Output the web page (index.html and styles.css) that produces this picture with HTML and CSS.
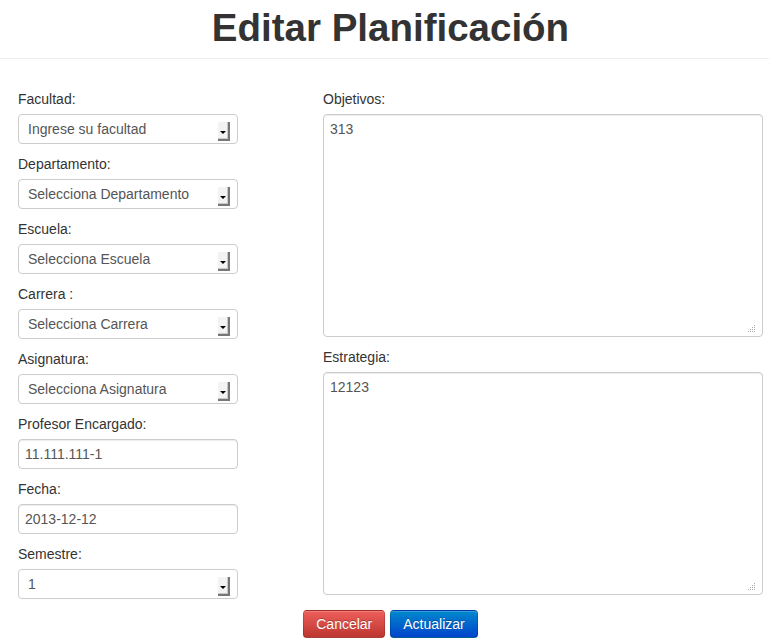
FILE: index.html
```html
<!DOCTYPE html>
<html lang="es">
<head>
<meta charset="utf-8">
<title>Editar Planificación</title>
<link rel="stylesheet" href="styles.css">
</head>
<body>
<header class="page-header">
  <h1>Editar Planificación</h1>
</header>
<form class="form">
  <div class="col-left">
    <label class="lbl">Facultad:</label>
    <div class="select"><span>Ingrese su facultad</span><svg class="arrow" width="12" height="19" viewBox="0 0 12 19"><rect x="0" y="0" width="12" height="19" fill="#f3f3f3"/><rect x="10" y="0" width="2" height="19" fill="#777"/><rect x="0" y="17" width="12" height="2" fill="#777"/><rect x="9" y="0" width="1" height="17" fill="#c8c8c8"/><rect x="0" y="16" width="10" height="1" fill="#c8c8c8"/><polygon points="2,9 8,9 5,12" fill="#000"/></svg></div>
    <label class="lbl">Departamento:</label>
    <div class="select"><span>Selecciona Departamento</span><svg class="arrow" width="12" height="19" viewBox="0 0 12 19"><rect x="0" y="0" width="12" height="19" fill="#f3f3f3"/><rect x="10" y="0" width="2" height="19" fill="#777"/><rect x="0" y="17" width="12" height="2" fill="#777"/><rect x="9" y="0" width="1" height="17" fill="#c8c8c8"/><rect x="0" y="16" width="10" height="1" fill="#c8c8c8"/><polygon points="2,9 8,9 5,12" fill="#000"/></svg></div>
    <label class="lbl">Escuela:</label>
    <div class="select"><span>Selecciona Escuela</span><svg class="arrow" width="12" height="19" viewBox="0 0 12 19"><rect x="0" y="0" width="12" height="19" fill="#f3f3f3"/><rect x="10" y="0" width="2" height="19" fill="#777"/><rect x="0" y="17" width="12" height="2" fill="#777"/><rect x="9" y="0" width="1" height="17" fill="#c8c8c8"/><rect x="0" y="16" width="10" height="1" fill="#c8c8c8"/><polygon points="2,9 8,9 5,12" fill="#000"/></svg></div>
    <label class="lbl">Carrera :</label>
    <div class="select"><span>Selecciona Carrera</span><svg class="arrow" width="12" height="19" viewBox="0 0 12 19"><rect x="0" y="0" width="12" height="19" fill="#f3f3f3"/><rect x="10" y="0" width="2" height="19" fill="#777"/><rect x="0" y="17" width="12" height="2" fill="#777"/><rect x="9" y="0" width="1" height="17" fill="#c8c8c8"/><rect x="0" y="16" width="10" height="1" fill="#c8c8c8"/><polygon points="2,9 8,9 5,12" fill="#000"/></svg></div>
    <label class="lbl">Asignatura:</label>
    <div class="select"><span>Selecciona Asignatura</span><svg class="arrow" width="12" height="19" viewBox="0 0 12 19"><rect x="0" y="0" width="12" height="19" fill="#f3f3f3"/><rect x="10" y="0" width="2" height="19" fill="#777"/><rect x="0" y="17" width="12" height="2" fill="#777"/><rect x="9" y="0" width="1" height="17" fill="#c8c8c8"/><rect x="0" y="16" width="10" height="1" fill="#c8c8c8"/><polygon points="2,9 8,9 5,12" fill="#000"/></svg></div>
    <label class="lbl">Profesor Encargado:</label>
    <input class="input" type="text" value="11.111.111-1">
    <label class="lbl">Fecha:</label>
    <input class="input" type="text" value="2013-12-12">
    <label class="lbl">Semestre:</label>
    <div class="select"><span>1</span><svg class="arrow" width="12" height="19" viewBox="0 0 12 19"><rect x="0" y="0" width="12" height="19" fill="#f3f3f3"/><rect x="10" y="0" width="2" height="19" fill="#777"/><rect x="0" y="17" width="12" height="2" fill="#777"/><rect x="9" y="0" width="1" height="17" fill="#c8c8c8"/><rect x="0" y="16" width="10" height="1" fill="#c8c8c8"/><polygon points="2,9 8,9 5,12" fill="#000"/></svg></div>
  </div>
  <div class="col-right">
    <label class="lbl">Objetivos:</label>
    <div class="area-wrap">
      <textarea class="area">313</textarea>
      <svg class="grip" width="7" height="7" viewBox="0 0 7 7"><g fill="#aaa"><rect x="6" y="0" width="1" height="1"/><rect x="4" y="2" width="1" height="1"/><rect x="6" y="2" width="1" height="1"/><rect x="2" y="4" width="1" height="1"/><rect x="4" y="4" width="1" height="1"/><rect x="6" y="4" width="1" height="1"/><rect x="0" y="6" width="1" height="1"/><rect x="2" y="6" width="1" height="1"/><rect x="4" y="6" width="1" height="1"/><rect x="6" y="6" width="1" height="1"/></g></svg>
    </div>
    <label class="lbl">Estrategia:</label>
    <div class="area-wrap">
      <textarea class="area">12123</textarea>
      <svg class="grip" width="7" height="7" viewBox="0 0 7 7"><g fill="#aaa"><rect x="6" y="0" width="1" height="1"/><rect x="4" y="2" width="1" height="1"/><rect x="6" y="2" width="1" height="1"/><rect x="2" y="4" width="1" height="1"/><rect x="4" y="4" width="1" height="1"/><rect x="6" y="4" width="1" height="1"/><rect x="0" y="6" width="1" height="1"/><rect x="2" y="6" width="1" height="1"/><rect x="4" y="6" width="1" height="1"/><rect x="6" y="6" width="1" height="1"/></g></svg>
    </div>
  </div>
  <div class="actions">
    <button type="button" class="btn btn-danger">Cancelar</button>
    <button type="button" class="btn btn-primary">Actualizar</button>
  </div>
</form>
</body>
</html>
```
FILE: styles.css
```css
html, body {
  margin: 0;
  padding: 0;
  background: #fff;
}
body {
  font-family: "Liberation Sans", Arial, Helvetica, sans-serif;
  font-size: 14px;
  line-height: 20px;
  color: #333;
}
.page-header {
  padding: 8px 0 10px;
  border-bottom: 1px solid #eee;
  margin-bottom: 30px;
}
.page-header h1 {
  margin: 0;
  padding-left: 12px;
  font-size: 38.5px;
  line-height: 40px;
  font-weight: bold;
  text-align: center;
  color: #333;
}
.form {
  display: grid;
  grid-template-columns: 220px 440px;
  column-gap: 85px;
  padding-left: 18px;
}
.col-left, .col-right {
  display: flex;
  flex-direction: column;
  align-items: flex-start;
}
.lbl {
  display: block;
  margin-bottom: 5px;
  line-height: 20px;
  color: #333;
}
.select {
  box-sizing: border-box;
  width: 220px;
  height: 30px;
  margin-bottom: 10px;
  border: 1px solid #ccc;
  border-radius: 4px;
  background: #fff;
  display: flex;
  justify-content: space-between;
  align-items: flex-start;
  padding: 4px 7px 0 9px;
  color: #555;
}
.select span {
  line-height: 20px;
}
.arrow {
  display: block;
  flex: none;
  margin-top: 3px;
}
.input {
  box-sizing: border-box;
  width: 220px;
  height: 30px;
  margin: 0 0 10px;
  padding: 4px 6px;
  border: 1px solid #ccc;
  border-radius: 4px;
  font-family: inherit;
  font-size: 14px;
  line-height: 20px;
  color: #555;
  box-shadow: inset 0 1px 1px rgba(0,0,0,.075);
  outline: none;
}
.area-wrap {
  position: relative;
  width: 440px;
  height: 223px;
  margin-bottom: 10px;
}
.area {
  display: block;
  box-sizing: border-box;
  width: 440px;
  height: 223px;
  margin: 0;
  padding: 4px 6px;
  border: 1px solid #ccc;
  border-radius: 4px;
  font-family: inherit;
  font-size: 14px;
  line-height: 20px;
  color: #555;
  box-shadow: inset 0 1px 1px rgba(0,0,0,.075);
  outline: none;
  resize: none;
}
.grip {
  position: absolute;
  right: 8px;
  bottom: 5px;
}
.actions {
  grid-column: 1 / -1;
  display: flex;
  justify-content: center;
  gap: 5px;
  padding-top: 1px;
}
.btn {
  height: 28px;
  padding: 3px 12px;
  font-family: inherit;
  font-size: 14px;
  line-height: 20px;
  color: #fff;
  text-shadow: 0 -1px 0 rgba(0,0,0,.25);
  border-radius: 4px;
  border: 1px solid rgba(0,0,0,.15);
  border-bottom-color: rgba(0,0,0,.3);
  box-shadow: inset 0 1px 0 rgba(255,255,255,.2), 0 1px 2px rgba(0,0,0,.05);
  cursor: pointer;
}
.btn-danger {
  background: linear-gradient(#ee5f5b, #bd362f);
}
.btn-primary {
  background: linear-gradient(#0088cc, #0044cc);
}
```
